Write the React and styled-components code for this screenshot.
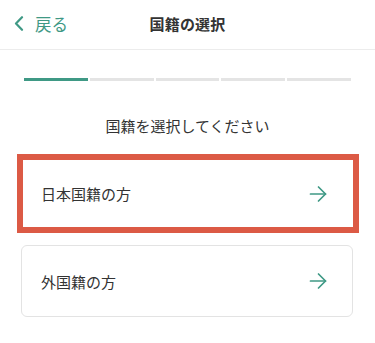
import React from 'react'
import styled, { createGlobalStyle } from 'styled-components'

const teal = '#3f9985'

const GlobalStyle = createGlobalStyle`
  * { box-sizing: border-box; }
  body {
    margin: 0;
    background: #fff;
    font-family: "Noto Sans CJK JP", "Noto Sans", sans-serif;
    color: #333;
  }
`

const Page = styled.div`
  width: 375px;
  height: 343px;
  background: #fff;
  overflow: hidden;
`

const Header = styled.header`
  height: 50px;
  border-bottom: 1px solid #ececec;
  display: grid;
  grid-template-columns: 1fr auto 1fr;
  align-items: center;
  padding: 0 13px 2px;
`

const BackButton = styled.button`
  display: flex;
  align-items: center;
  gap: 11px;
  border: none;
  background: none;
  padding: 0 0 0 1px;
  color: ${teal};
  font-family: inherit;
  font-size: 16.5px;
  justify-self: start;
  cursor: pointer;
`

const Title = styled.h1`
  margin: 0;
  font-size: 15px;
  font-weight: 700;
  color: #333;
  letter-spacing: 0.2px;
`

const Progress = styled.div`
  display: flex;
  gap: 2px;
  padding: 0 24px;
  margin-top: 28px;
`

const Step = styled.div`
  flex: 1;
  height: 3px;
  background: ${(p) => (p.$done ? teal : '#e4e4e4')};
`

const Subtitle = styled.p`
  margin: 34px 0 0;
  text-align: center;
  font-size: 15px;
  line-height: 22px;
  color: #333;
`

const List = styled.div`
  display: flex;
  flex-direction: column;
  gap: 12px;
  padding: 0 22px 0 21px;
  margin-top: 17px;
`

const Option = styled.button`
  display: flex;
  align-items: center;
  justify-content: space-between;
  width: ${(p) => (p.$highlight ? 'calc(100% + 10px)' : '100%')};
  height: ${(p) => (p.$highlight ? '79px' : '72px')};
  margin: ${(p) => (p.$highlight ? '0 -6px 0 -4px' : '0')};
  padding: ${(p) => (p.$highlight ? '0 26px 0 18px' : '0 25px 0 19px')};
  background: #fff;
  border: ${(p) => (p.$highlight ? '6px solid #dc5a45' : '1px solid #e3e3e3')};
  border-radius: ${(p) => (p.$highlight ? '0' : '6px')};
  font-family: inherit;
  font-size: 15px;
  color: #333;
  text-align: left;
  cursor: pointer;
`

const Arrow = () => (
  <svg width="18" height="18" viewBox="0 0 18 18" fill="none" stroke={teal} strokeWidth="1.7" strokeLinecap="round" strokeLinejoin="round">
    <path d="M1.5 9h15" />
    <path d="M9.5 2l7 7-7 7" />
  </svg>
)

const Chevron = () => (
  <svg width="10" height="15" viewBox="0 0 10 15" fill="none" stroke={teal} strokeWidth="2.2" strokeLinecap="round" strokeLinejoin="round">
    <path d="M8 1.2L2 7.5 8 13.8" />
  </svg>
)

const options = ['日本国籍の方', '外国籍の方']

export default function App() {
  return (
    <Page>
      <GlobalStyle />
      <Header>
        <BackButton>
          <Chevron />
          戻る
        </BackButton>
        <Title>国籍の選択</Title>
        <span />
      </Header>
      <Progress>
        {[0, 1, 2, 3, 4].map((i) => (
          <Step key={i} $done={i === 0} />
        ))}
      </Progress>
      <Subtitle>国籍を選択してください</Subtitle>
      <List>
        {options.map((label, i) => (
          <Option key={label} $highlight={i === 0}>
            <span>{label}</span>
            <Arrow />
          </Option>
        ))}
      </List>
    </Page>
  )
}
